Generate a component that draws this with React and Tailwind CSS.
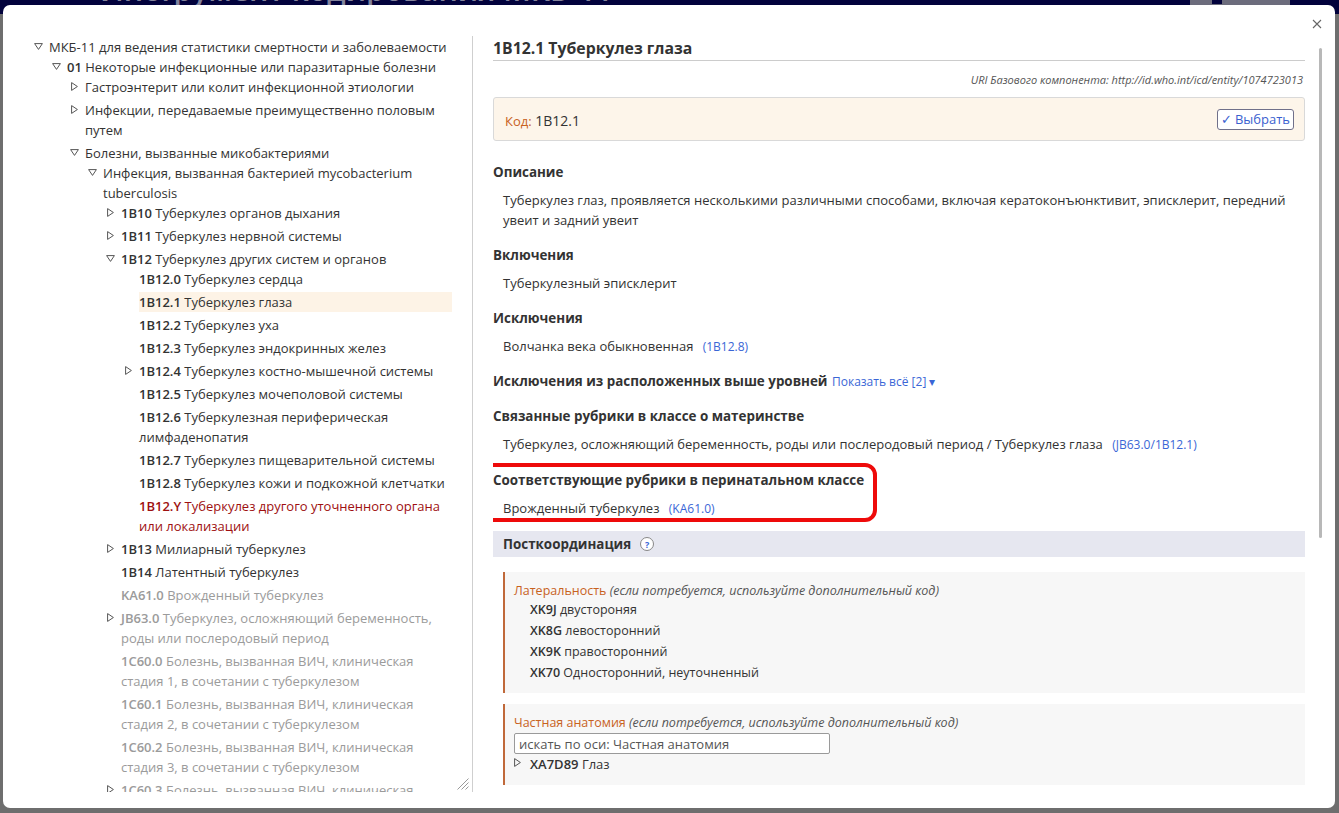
import React from "react";

const tree = {
  label: "МКБ-11 для ведения статистики смертности и заболеваемости",
  state: "open",
  children: [
    {
      code: "01",
      label: "Некоторые инфекционные или паразитарные болезни",
      state: "open",
      children: [
        { label: "Гастроэнтерит или колит инфекционной этиологии", state: "closed" },
        { label: "Инфекции, передаваемые преимущественно половым путем", state: "closed" },
        {
          label: "Болезни, вызванные микобактериями",
          state: "open",
          children: [
            {
              label: "Инфекция, вызванная бактерией mycobacterium tuberculosis",
              state: "open",
              children: [
                { code: "1B10", label: "Туберкулез органов дыхания", state: "closed" },
                { code: "1B11", label: "Туберкулез нервной системы", state: "closed" },
                {
                  code: "1B12",
                  label: "Туберкулез других систем и органов",
                  state: "open",
                  children: [
                    { code: "1B12.0", label: "Туберкулез сердца" },
                    { code: "1B12.1", label: "Туберкулез глаза", selected: true },
                    { code: "1B12.2", label: "Туберкулез уха" },
                    { code: "1B12.3", label: "Туберкулез эндокринных желез" },
                    { code: "1B12.4", label: "Туберкулез костно-мышечной системы", state: "closed" },
                    { code: "1B12.5", label: "Туберкулез мочеполовой системы" },
                    { code: "1B12.6", label: "Туберкулезная периферическая лимфаденопатия" },
                    { code: "1B12.7", label: "Туберкулез пищеварительной системы" },
                    { code: "1B12.8", label: "Туберкулез кожи и подкожной клетчатки" },
                    { code: "1B12.Y", label: "Туберкулез другого уточненного органа или локализации", tone: "red" },
                  ],
                },
                { code: "1B13", label: "Милиарный туберкулез", state: "closed" },
                { code: "1B14", label: "Латентный туберкулез" },
                { code: "KA61.0", label: "Врожденный туберкулез", tone: "gray" },
                { code: "JB63.0", label: "Туберкулез, осложняющий беременность, роды или послеродовый период", tone: "gray", state: "closed" },
                { code: "1C60.0", label: "Болезнь, вызванная ВИЧ, клиническая стадия 1, в сочетании с туберкулезом", tone: "gray" },
                { code: "1C60.1", label: "Болезнь, вызванная ВИЧ, клиническая стадия 2, в сочетании с туберкулезом", tone: "gray" },
                { code: "1C60.2", label: "Болезнь, вызванная ВИЧ, клиническая стадия 3, в сочетании с туберкулезом", tone: "gray" },
                { code: "1C60.3", label: "Болезнь, вызванная ВИЧ, клиническая стадия 4, в сочетании с туберкулезом", tone: "gray", state: "closed" },
              ],
            },
          ],
        },
      ],
    },
  ],
};

function Toggle({ state }) {
  if (state === "open")
    return (
      <svg width="9" height="7" viewBox="0 0 9 7" className="mt-[6px] ml-[3px]">
        <path d="M0.6 0.6H8.4L4.5 6.4Z" fill="none" stroke="#555" strokeWidth="1" strokeLinejoin="round" />
      </svg>
    );
  if (state === "closed")
    return (
      <svg width="7" height="9" viewBox="0 0 7 9" className="mt-[5px] ml-[4px]">
        <path d="M0.6 0.6L6.4 4.5L0.6 8.4Z" fill="none" stroke="#555" strokeWidth="1" strokeLinejoin="round" />
      </svg>
    );
  return null;
}

function TreeNode({ node }) {
  const tone =
    node.tone === "gray" ? "text-[#9b9b9b]" : node.tone === "red" ? "text-[#9e1010]" : "text-[#333]";
  return (
    <div className="flex flex-col">
      <div className="flex items-start">
        <span className="w-[18px] h-[20px] shrink-0 flex items-start">
          <Toggle state={node.state} />
        </span>
        <span className={`flex-1 leading-[20px] ${tone} ${node.selected ? "bg-[#fdf3e6]" : ""}`}>
          {node.code && <span className="font-semibold">{node.code} </span>}
          {node.label}
        </span>
      </div>
      {node.children && (
        <div className="pl-[18px] flex flex-col gap-[3px]">
          {node.children.map((c) => (
            <TreeNode key={c.code || c.label} node={c} />
          ))}
        </div>
      )}
    </div>
  );
}

function Heading({ children, className = "" }) {
  return <h3 className={`text-[13.4px] leading-[20px] font-bold text-[#333] ${className}`}>{children}</h3>;
}

function Line({ children, className = "" }) {
  return <p className={`pl-[10px] text-[13px] leading-[20px] text-[#333] ${className}`}>{children}</p>;
}

function Ref({ children }) {
  return <span className="ml-[6px] text-[12px] text-[#3a66d6]">{children}</span>;
}

function AxisBox({ title, children, className = "" }) {
  return (
    <div className={`ml-[10px] bg-[#f7f7f7] border-l-2 border-[#c0693a] pl-[9px] pt-[11px] pb-[10px] ${className}`}>
      <div className="h-[16px] text-[12.5px] leading-[16px]">
        <span className="text-[#c8621e]">{title}</span>{" "}
        <span className="italic text-[#555]">(если потребуется, используйте дополнительный код)</span>
      </div>
      {children}
    </div>
  );
}

export default function App() {
  return (
    <div className="relative h-[813px] w-[1339px] overflow-hidden bg-[#6e6e6e] font-['Open_Sans',sans-serif]">
      <div className="h-[14px] bg-[#02023c] flex overflow-hidden">
        <div className="ml-[100px] -mt-[25px] text-[30px] leading-[30px] font-semibold text-[#84849c] whitespace-nowrap">
          Инструмент кодирования МКБ-11
        </div>
        <div className="ml-auto mr-[49px] w-[100px] h-[30px] bg-[#6c6c7c] flex">
          <div className="ml-[22px] w-[10px] h-[4px] bg-[#02023c]" />
        </div>
      </div>

      <div className="absolute left-[3px] top-[5px] w-[1332px] h-[803px] bg-white rounded-[7px] overflow-hidden">
        <button className="absolute right-[13px] top-[14px] w-[10px] h-[10px]">
          <svg width="10" height="10" viewBox="0 0 10 10">
            <path d="M1 1L9 9M9 1L1 9" stroke="#666" strokeWidth="1.1" />
          </svg>
        </button>

        <div className="absolute left-[1316px] top-[43px] w-[3px] h-[490px] rounded-full bg-[#b8b8b8]" />

        <div className="flex pt-[31px]">
          <div className="relative ml-[28px] w-[442px] h-[756px] border-r border-[#cfcfcf] overflow-hidden pt-[1px] pr-[20px] text-[13px]">
            <TreeNode node={tree} />
            <svg
              width="12"
              height="12"
              viewBox="0 0 12 12"
              className="absolute right-[3px] bottom-[2px]"
            >
              <path d="M11.5 0.5L0.5 11.5M11.5 4.5L4.5 11.5M11.5 8.5L8.5 11.5" stroke="#999" strokeWidth="1" />
            </svg>
          </div>

          <div className="ml-[20px] w-[812px] h-[756px] overflow-hidden pt-[1px] text-[#333]">
            <h1 className="text-[15.8px] leading-[22px] font-bold border-b border-[#cccccc] pb-px">
              1B12.1 Туберкулез глаза
            </h1>
            <div className="mt-[11px] text-right pr-[2px] text-[11px] leading-[16px] italic text-[#555]">
              URI Базового компонента: http://id.who.int/icd/entity/1074723013
            </div>
            <div className="mt-[9px] h-[44px] bg-[#fdf5ea] border border-[#d9d9d9] rounded-[3px] flex items-center justify-between pl-[11px] pr-[10px]">
              <div className="text-[14px] pt-[3px]">
                <span className="text-[13px] text-[#c8621e]">Код:</span> 1B12.1
              </div>
              <button className="h-[21px] px-[3px] border border-[#70708a] rounded-[3px] bg-white text-[13px] leading-[19px] text-[#3a5fd0]">
                ✓ Выбрать
              </button>
            </div>

            <Heading className="mt-[21px]">Описание</Heading>
            <Line className="mt-[8px]">
              Туберкулез глаз, проявляется несколькими различными способами, включая кератоконъюнктивит, эписклерит, передний
              увеит и задний увеит
            </Line>

            <Heading className="mt-[15px]">Включения</Heading>
            <Line className="mt-[8px]">Туберкулезный эписклерит</Line>

            <Heading className="mt-[15px]">Исключения</Heading>
            <Line className="mt-[8px]">
              Волчанка века обыкновенная <Ref>(1B12.8)</Ref>
            </Line>

            <Heading className="mt-[14px]">
              Исключения из расположенных выше уровней{" "}
              <span className="ml-[1px] text-[12px] font-normal text-[#3a66d6]">Показать всё [2] ▾</span>
            </Heading>

            <Heading className="mt-[14px]">Связанные рубрики в классе о материнстве</Heading>
            <Line className="mt-[8px]">
              Туберкулез, осложняющий беременность, роды или послеродовый период / Туберкулез глаза <Ref>(JB63.0/1B12.1)</Ref>
            </Line>

            <div className="relative mt-[15px]">
              <Heading>Соответствующие рубрики в перинатальном классе</Heading>
              <Line className="mt-[8px]">
                Врожденный туберкулез <Ref>(KA61.0)</Ref>
              </Line>
              <div className="absolute -left-[12px] -top-[7px] w-[396px] h-[59px] border-4 border-[#ee0a0a] rounded-[12px]" />
            </div>

            <div className="mt-[12px] h-[26px] bg-[#e6e7f0] flex items-center pl-[10px]">
              <span className="text-[13.4px] font-bold">Посткоординация</span>
              <span className="ml-[9px] w-[14px] h-[14px] rounded-full border border-[#888] bg-white flex items-center justify-center text-[9px] font-bold leading-none text-[#3a66d6]">
                ?
              </span>
            </div>

            <AxisBox title="Латеральность" className="mt-[15px]">
              <div className="pl-[16px] text-[12.5px] leading-[21px] text-[#333]">
                {[
                  ["XK9J", "двустороняя"],
                  ["XK8G", "левосторонний"],
                  ["XK9K", "правосторонний"],
                  ["XK70", "Односторонний, неуточненный"],
                ].map(([c, l]) => (
                  <div key={c}>
                    <span className="font-semibold">{c}</span> {l}
                  </div>
                ))}
              </div>
            </AxisBox>

            <AxisBox title="Частная анатомия" className="mt-[11px]">
              <input
                className="block w-[316px] h-[21px] mt-[2px] border border-[#9a9a9a] rounded-[2px] bg-white px-[4px] text-[13px] placeholder:text-[#555] outline-none"
                placeholder="искать по оси: Частная анатомия"
              />
              <div className="flex items-start text-[13px] leading-[21px]">
                <span className="w-[16px] h-[20px] shrink-0">
                  <svg width="7" height="9" viewBox="0 0 7 9" className="mt-[4px]">
                    <path d="M0.6 0.6L6.4 4.5L0.6 8.4Z" fill="none" stroke="#555" strokeWidth="1" strokeLinejoin="round" />
                  </svg>
                </span>
                <span>
                  <span className="font-semibold">XA7D89</span> Глаз
                </span>
              </div>
            </AxisBox>
          </div>
        </div>
      </div>
    </div>
  );
}
